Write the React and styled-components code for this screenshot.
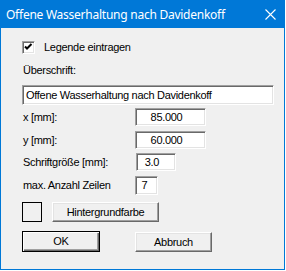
import React from "react";
import styled, { createGlobalStyle } from "styled-components";

const Global = createGlobalStyle`
  html, body { margin: 0; padding: 0; background: #ffffff; }
  body { font-family: "Liberation Sans", Arial, sans-serif; font-size: 11px; letter-spacing: -0.3px; color: #000; }
`;

const Window = styled.div`
  width: 285px;
  height: 270px;
  box-sizing: border-box;
  background: #f0f0f0;
  border: 1px solid #0078d7;
  border-top: none;
  display: flex;
  flex-direction: column;
`;

const TitleBar = styled.div`
  height: 28px;
  margin: 0 -1px;
  background: #0078d7;
  display: flex;
  align-items: center;
  justify-content: space-between;
  padding: 0 9px 0 6px;
  color: #fff;
  font-family: "Noto Sans", "Open Sans", sans-serif;
  font-size: 12px;
  letter-spacing: -0.25px;
`;

const Content = styled.div`
  display: flex;
  flex-direction: column;
  padding: 13px 0 0 21px;
`;

const Row = styled.div`
  display: flex;
  align-items: center;
  height: ${(p) => p.$h}px;
  margin-top: ${(p) => p.$mt || 0}px;
`;

const Label = styled.span`
  width: ${(p) => (p.$w ? `${p.$w}px` : "auto")};
  padding-left: ${(p) => p.$pl ?? 1}px;
  box-sizing: border-box;
  white-space: nowrap;
  line-height: 13px;
`;

const CheckBox = styled.span`
  width: 13px;
  height: 13px;
  box-sizing: border-box;
  background: #fff;
  border-top: 1px solid #a0a0a0;
  border-left: 1px solid #a0a0a0;
  border-right: 1px solid #fff;
  border-bottom: 1px solid #fff;
  box-shadow: inset 1px 1px 0 #696969, inset -1px -1px 0 #e3e3e3;
  display: flex;
  align-items: center;
  justify-content: center;
  margin-right: 9px;
`;

const Field = styled.div`
  width: ${(p) => p.$w}px;
  height: ${(p) => p.$h}px;
  margin-left: ${(p) => p.$ml || 0}px;
  box-sizing: border-box;
  background: #fff;
  border-top: 1px solid #a0a0a0;
  border-left: 1px solid #a0a0a0;
  border-right: 1px solid #fff;
  border-bottom: 1px solid #fff;
  box-shadow: inset 1px 1px 0 #696969, inset -1px -1px 0 #e3e3e3;
  display: flex;
  align-items: center;
  justify-content: ${(p) => (p.$center ? "center" : "flex-start")};
  padding: ${(p) => (p.$center ? `0 ${p.$pr ?? 8}px 0 0` : "0 0 0 3px")};
  white-space: nowrap;
  overflow: hidden;
  line-height: 13px;
`;

const Swatch = styled.div`
  width: 20px;
  height: 20px;
  box-sizing: border-box;
  border: 1px solid #000;
  background: #f0f0f0;
`;

const Button = styled.div`
  width: ${(p) => p.$w}px;
  height: ${(p) => p.$h}px;
  margin-left: ${(p) => p.$ml || 0}px;
  align-self: ${(p) => p.$self || "auto"};
  box-sizing: border-box;
  background: #f0f0f0;
  border-top: 1px solid ${(p) => (p.$default ? "#000" : "#fff")};
  border-left: 1px solid ${(p) => (p.$default ? "#000" : "#fff")};
  border-right: 1px solid ${(p) => (p.$default ? "#000" : "#696969")};
  border-bottom: 1px solid ${(p) => (p.$default ? "#000" : "#696969")};
  box-shadow: ${(p) =>
    p.$default
      ? "inset 1px 1px 0 #fff, inset -1px -1px 0 #696969, inset -2px -2px 0 #a0a0a0"
      : "inset -1px -1px 0 #a0a0a0, inset 1px 1px 0 #e3e3e3"};
  display: flex;
  align-items: center;
  justify-content: center;
  line-height: 13px;
`;

const ButtonRow = styled.div`
  display: flex;
  align-items: flex-start;
  margin-top: 9px;
`;

const fields = [
  { label: "x [mm]:", value: "85.000", w: 71, h: 18, mt: 3, ml: 0 },
  { label: "y [mm]:", value: "60.000", w: 71, h: 18, mt: 5, ml: 0 },
  { label: "Schriftgröße [mm]:", value: "3.0", w: 40, h: 18, mt: 4, ml: 1 },
  { label: "max. Anzahl Zeilen", value: "7", w: 23, h: 19, mt: 5, ml: 0, pr: 4 },
];

export default function App() {
  return (
    <>
      <Global />
      <Window>
        <TitleBar>
          <span>Offene Wasserhaltung nach Davidenkoff</span>
          <svg width="11" height="11" viewBox="0 0 11 11">
            <path d="M0.5 0.5 L10.5 10.5 M10.5 0.5 L0.5 10.5" stroke="#fff" strokeWidth="1.1" />
          </svg>
        </TitleBar>
        <Content>
          <Row $h={13}>
            <CheckBox>
              <svg width="9" height="9" viewBox="0 0 9 9">
                <path d="M1 3.5 L3 5.5 L7.5 1" fill="none" stroke="#000" strokeWidth="2" />
              </svg>
            </CheckBox>
            <Label $pl={0}>Legende eintragen</Label>
          </Row>
          <Row $h={13} $mt={10}>
            <Label>Überschrift:</Label>
          </Row>
          <Row $h={20} $mt={8}>
            <Field $w={252} $h={20}>Offene Wasserhaltung nach Davidenkoff</Field>
          </Row>
          {fields.map((f) => (
            <Row key={f.label} $h={f.h} $mt={f.mt}>
              <Label $w={113}>{f.label}</Label>
              <Field $w={f.w} $h={f.h} $ml={f.ml} $center $pr={f.pr}>
                {f.value}
              </Field>
            </Row>
          ))}
          <Row $h={20} $mt={7}>
            <Swatch />
            <Button $w={107} $h={20} $ml={10}>Hintergrundfarbe</Button>
          </Row>
          <ButtonRow>
            <Button $w={78} $h={21} $default>OK</Button>
            <Button $w={77} $h={20} $ml={35} $self="flex-end">Abbruch</Button>
          </ButtonRow>
        </Content>
      </Window>
    </>
  );
}
